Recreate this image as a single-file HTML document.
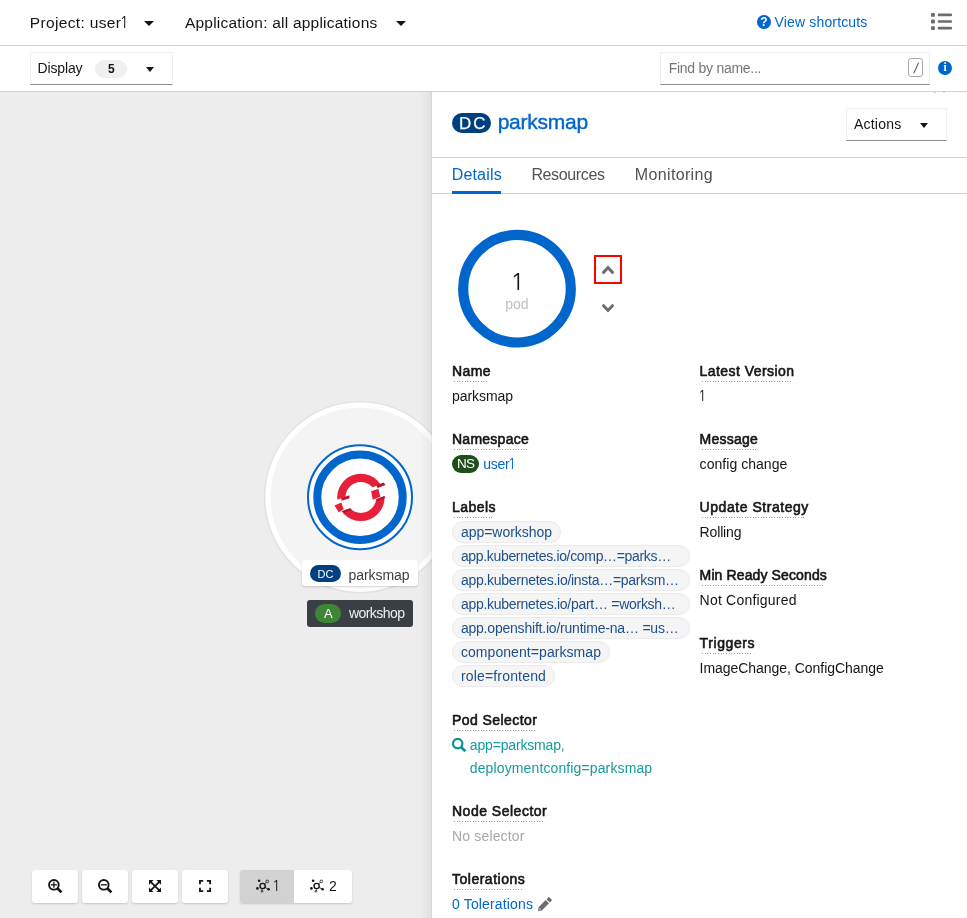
<!DOCTYPE html>
<html><head><meta charset="utf-8">
<style>
*{box-sizing:border-box}
html,body{margin:0;padding:0}
body{width:967px;height:918px;overflow:hidden;position:relative;background:#fff;font-family:"Liberation Sans",sans-serif;color:#151515;font-size:14px}
.a{position:absolute}
.caret{position:absolute;width:0;height:0;border-left:5px solid transparent;border-right:5px solid transparent;border-top:5.5px solid #151515}
.t{position:absolute;white-space:nowrap;line-height:1;display:block}
.n{font-family:"NanumGothic",sans-serif;line-height:0;margin:0 -.13em 0 -.12em}
.b{-webkit-text-stroke:.6px #151515}
.dot{position:absolute;height:1px;background:repeating-linear-gradient(90deg,#9b9ea1 0,#9b9ea1 1.1px,transparent 1.1px,transparent 2.667px)}
.pill{position:absolute;left:452px;height:22px;border-radius:11px;background:#f5f5f5;border:1px solid #ebebeb}
.btn{position:absolute;top:870px;height:33px;background:#fff;border-radius:3px;box-shadow:0 1px 2px rgba(0,0,0,.16)}
svg{position:absolute;overflow:visible}
#w{position:absolute;left:0;top:0;width:967px;height:918px;will-change:transform}
</style></head><body><div id="w">

<!-- canvas -->
<div class="a" style="left:0;top:92px;width:432px;height:826px;background:#ededed"></div>

<!-- topology -->
<svg style="left:0;top:92px" width="432" height="826" viewBox="0 92 432 826">
  <defs>
    <radialGradient id="gg" cx="50%" cy="50%" r="50%"><stop offset="0" stop-color="#f0f0f0"/><stop offset="1" stop-color="#f3f3f3"/></radialGradient>
  </defs>
  <circle cx="360" cy="497.3" r="95.3" fill="none" stroke="rgba(0,0,0,.045)" stroke-width="2"/>
  <circle cx="360" cy="497" r="92.1" fill="#f4f4f4" stroke="#ffffff" stroke-width="5.2"/>
  <circle cx="360" cy="497.3" r="52" fill="#ffffff" stroke="#0066cc" stroke-width="2"/>
  <circle cx="360" cy="497.3" r="42.7" fill="none" stroke="#0066cc" stroke-width="8"/>
  <!--LOGO--><g transform="translate(325,462) scale(0.07628)">
    <defs>
      <clipPath id="cu"><polygon points="0,0 918,0 918,225 0,551"/></clipPath>
      <clipPath id="cl"><polygon points="0,725 918,398 918,918 0,918"/></clipPath>
    </defs>
    <circle cx="470" cy="465" r="256" fill="none" stroke="#e61f3a" stroke-width="108" clip-path="url(#cu)"/>
    <circle cx="470" cy="465" r="256" fill="none" stroke="#e61f3a" stroke-width="108" clip-path="url(#cl)"/>
    <polygon points="125,570 215,530 245,620 180,660" fill="#e61f3a"/>
    <polygon points="605,385 700,350 725,455 625,495" fill="#e61f3a"/>
    <polygon points="212,472 320,435 322,474 218,508" fill="#b8142c"/>
    <polygon points="225,642 330,605 352,628 252,668" fill="#b8142c"/>
    <polygon points="672,306 770,268 792,300 690,340" fill="#b8142c"/>
    <polygon points="680,490 782,445 786,475 690,515" fill="#b8142c"/>
  </g><!--/LOGO-->
</svg>

<!-- node labels -->
<div class="a" style="left:302px;top:560px;width:116px;height:26px;background:#fff;border-radius:3px;box-shadow:0 1px 2px rgba(0,0,0,.18)"></div>
<div class="a" style="left:310px;top:565px;width:31px;height:16.5px;border-radius:9px;background:#004080"></div>
<div class="a" style="left:307px;top:600px;width:106px;height:27px;background:#393f44;border-radius:3px"></div>
<div class="a" style="left:315px;top:603.5px;width:26px;height:19.5px;border-radius:10px;background:#3e8635"></div>

<!-- control bar -->
<div class="btn" style="left:32px;width:46px"></div>
<div class="btn" style="left:82px;width:46px"></div>
<div class="btn" style="left:132px;width:46px"></div>
<div class="btn" style="left:182px;width:46px"></div>
<div class="btn" style="left:240px;width:112px"></div>
<div class="a" style="left:240px;top:870px;width:54px;height:33px;background:#d2d2d2;border-radius:3px 0 0 3px"></div>
<!--CTRLICONS--><svg style="left:0;top:860px" width="432" height="58" viewBox="0 860 432 58"><circle cx="53.9" cy="884.8" r="4.85" fill="none" stroke="#151515" stroke-width="1.9"/><line x1="57.6" y1="888.5" x2="61.5" y2="892.4" stroke="#151515" stroke-width="2.6" stroke-linecap="butt"/><line x1="50.9" y1="884.8" x2="56.9" y2="884.8" stroke="#151515" stroke-width="1.3"/><line x1="53.9" y1="881.8" x2="53.9" y2="887.8" stroke="#151515" stroke-width="1.3"/><circle cx="103.8" cy="884.8" r="4.85" fill="none" stroke="#151515" stroke-width="1.9"/><line x1="107.5" y1="888.5" x2="111.4" y2="892.4" stroke="#151515" stroke-width="2.6" stroke-linecap="butt"/><line x1="100.8" y1="884.8" x2="106.8" y2="884.8" stroke="#151515" stroke-width="1.3"/><path d="M150.0 881.05 L160.0 891.05 M160.0 881.05 L150.0 891.05" stroke="#151515" stroke-width="1.7" fill="none"/><polygon points="149.0,880.05 153.6,880.05 149.0,884.65" fill="#151515"/><polygon points="149.0,892.05 153.6,892.05 149.0,887.4499999999999" fill="#151515"/><polygon points="161.0,880.05 156.4,880.05 161.0,884.65" fill="#151515"/><polygon points="161.0,892.05 156.4,892.05 161.0,887.4499999999999" fill="#151515"/><path d="M203.25000000000003 880.9499999999999 L199.95000000000002 880.9499999999999 L199.95000000000002 884.2499999999999 M203.25000000000003 891.15 L199.95000000000002 891.15 L199.95000000000002 887.85 M206.85 880.9499999999999 L210.15 880.9499999999999 L210.15 884.2499999999999 M206.85 891.15 L210.15 891.15 L210.15 887.85 " stroke="#151515" stroke-width="1.8" fill="none" stroke-linecap="butt" stroke-linejoin="miter"/><line x1="264.6" y1="884" x2="266.6" y2="882.2" stroke="#151515" stroke-width=".7"/><line x1="265.1" y1="887.5" x2="268.3" y2="889.2" stroke="#151515" stroke-width=".8"/><line x1="262.3" y1="889" x2="262.1" y2="890.4" stroke="#151515" stroke-width=".7"/><circle cx="262.6" cy="886" r="2.6" fill="none" stroke="#151515" stroke-width="1.4"/><circle cx="259.1" cy="880.8" r="1.25" fill="#151515"/><circle cx="267.3" cy="881.4" r="1.35" fill="none" stroke="#151515" stroke-width=".8"/><circle cx="257.4" cy="888.4" r="1.3" fill="#151515"/><circle cx="268.6" cy="889.3" r="1.3" fill="#151515"/><circle cx="262" cy="891.3" r="0.95" fill="none" stroke="#151515" stroke-width=".8"/><line x1="318.6" y1="884" x2="320.6" y2="882.2" stroke="#151515" stroke-width=".7"/><line x1="319.1" y1="887.5" x2="322.3" y2="889.2" stroke="#151515" stroke-width=".8"/><line x1="316.3" y1="889" x2="316.1" y2="890.4" stroke="#151515" stroke-width=".7"/><circle cx="316.6" cy="886" r="2.6" fill="none" stroke="#151515" stroke-width="1.4"/><circle cx="313.1" cy="880.8" r="1.25" fill="#151515"/><circle cx="321.3" cy="881.4" r="1.35" fill="none" stroke="#151515" stroke-width=".8"/><circle cx="311.4" cy="888.4" r="1.3" fill="#151515"/><circle cx="322.6" cy="889.3" r="1.3" fill="#151515"/><circle cx="316" cy="891.3" r="0.95" fill="none" stroke="#151515" stroke-width=".8"/></svg><!--/CTRLICONS-->

<!-- side panel -->
<div class="a" style="left:432px;top:92px;width:535px;height:826px;background:#fff;"></div>
<div class="a" style="left:419px;top:92px;width:13px;height:826px;background:linear-gradient(90deg,rgba(0,0,0,0),rgba(0,0,0,.02) 45%,rgba(0,0,0,.055))"></div>
<div class="a" style="left:431px;top:92px;width:1px;height:826px;background:rgba(0,0,0,.045)"></div>

<!-- top bars -->
<div class="a" style="left:0;top:0;width:967px;height:46px;background:#fff;border-bottom:1px solid #d2d2d2"></div>
<div class="a" style="left:0;top:46px;width:967px;height:46px;background:#fff;border-bottom:1px solid #d2d2d2"></div>
<div class="caret" style="left:144px;top:20.8px"></div>
<div class="caret" style="left:396.4px;top:20.8px"></div>
<!-- ? icon -->
<div class="a" style="left:757.1px;top:15.1px;width:13.8px;height:13.8px;border-radius:50%;background:#0066cc;color:#fff;font-weight:700;font-size:12px;line-height:14.4px;text-align:center">?</div>
<!-- list icon -->
<svg style="left:930px;top:12px" width="24" height="20" viewBox="930 12 24 20">
 <g fill="#6a6e73">
  <rect x="931" y="13" width="3.9" height="3.8" rx=".9"/><rect x="937.7" y="13.6" width="14.4" height="2.6" rx="1.2"/>
  <rect x="931" y="19.6" width="3.9" height="3.8" rx=".9"/><rect x="937.7" y="20.2" width="14.4" height="2.6" rx="1.2"/>
  <rect x="931" y="26.2" width="3.9" height="3.8" rx=".9"/><rect x="937.7" y="26.8" width="14.4" height="2.6" rx="1.2"/>
 </g>
</svg>

<!-- display dropdown -->
<div class="a" style="left:30px;top:52px;width:143px;height:33px;border:1px solid #f0f0f0;border-bottom:1px solid #8a8d90;background:#fff"></div>
<div class="a" style="left:95px;top:60px;width:32px;height:18px;border-radius:9px;background:#f0f0f0"></div>
<div class="caret" style="left:145.6px;top:66.8px;border-left-width:4.4px;border-right-width:4.4px"></div>
<!-- search -->
<div class="a" style="left:660px;top:52px;width:270px;height:33px;border:1px solid #f0f0f0;border-bottom:1px solid #8a8d90;background:#fff"></div>
<div class="a" style="left:908px;top:58px;width:15px;height:18.5px;border:1px solid #a6a9ac;border-radius:3px;font-size:14px;text-align:center;line-height:19px;color:#4f5255"><span style="display:inline-block;transform:skewX(-11deg)">/</span></div>
<div class="a" style="left:938.2px;top:61px;width:13.8px;height:13.8px;border-radius:50%;background:#0066cc;color:#fff;font-weight:700;font-size:11.5px;line-height:13.6px;text-align:center;font-family:'Liberation Serif',serif">i</div>

<div class="a" style="left:934px;top:92px;width:2px;height:1px;background:#d0d0d0"></div><div class="a" style="left:942.6px;top:92px;width:2px;height:1px;background:#d0d0d0"></div>
<!-- panel header -->
<div class="a" style="left:452px;top:112.6px;width:39px;height:20px;border-radius:10px;background:#004080"></div>
<div class="a" style="left:846px;top:108px;width:101px;height:33px;border:1px solid #f0f0f0;border-bottom:1px solid #8a8d90;background:#fff"></div>
<div class="caret" style="left:919.6px;top:123px;border-left-width:4.4px;border-right-width:4.4px;border-top-width:5px"></div>
<div class="a" style="left:432px;top:157px;width:535px;height:1px;background:#d2d2d2"></div>
<div class="a" style="left:432px;top:193px;width:535px;height:1px;background:#d2d2d2"></div>
<div class="a" style="left:452px;top:191px;width:49px;height:3px;background:#0066cc"></div>

<!-- pod ring -->
<svg style="left:440px;top:215px" width="200" height="150" viewBox="440 215 200 150">
  <circle cx="517" cy="288.7" r="53.8" fill="none" stroke="#0066cc" stroke-width="10.2"/>
  <rect x="595" y="256" width="26" height="27" fill="none" stroke="#ff0000" stroke-width="2"/>
  <polyline points="603.5,272.4 608,267.7 612.5,272.4" fill="none" stroke="#6a6e73" stroke-width="3" stroke-linecap="round" stroke-linejoin="miter"/>
  <polyline points="603.5,305.7 608,310.3 612.5,305.7" fill="none" stroke="#6a6e73" stroke-width="3" stroke-linecap="round" stroke-linejoin="miter"/>
</svg>

<!-- dotted underlines -->
<div class="dot" style="left:454.2px;top:381px;width:34.6px"></div>
<div class="dot" style="left:454.2px;top:449px;width:72.6px"></div>
<div class="dot" style="left:454.2px;top:517px;width:39.6px"></div>
<div class="dot" style="left:454.2px;top:730px;width:80.6px"></div>
<div class="dot" style="left:454.2px;top:821px;width:90.6px"></div>
<div class="dot" style="left:454.2px;top:889px;width:68.6px"></div>
<div class="dot" style="left:701.8px;top:381px;width:90.6px"></div>
<div class="dot" style="left:701.8px;top:449px;width:54.6px"></div>
<div class="dot" style="left:701.8px;top:517px;width:104.6px"></div>
<div class="dot" style="left:701.8px;top:585px;width:123.6px"></div>
<div class="dot" style="left:701.8px;top:653px;width:50.6px"></div>

<!-- NS badge -->
<div class="a" style="left:452px;top:455px;width:27px;height:18px;border-radius:9px;background:#1e4f18"></div>

<!-- label pills -->
<div class="pill" style="top:521px;width:109px"></div>
<div class="pill" style="top:545px;width:238px"></div>
<div class="pill" style="top:569px;width:238px"></div>
<div class="pill" style="top:593px;width:238px"></div>
<div class="pill" style="top:617px;width:238px"></div>
<div class="pill" style="top:641px;width:158px"></div>
<div class="pill" style="top:665px;width:103px"></div>

<!-- search + pencil icons -->
<svg style="left:452px;top:738px" width="15" height="15" viewBox="452 738 15 15">
  <circle cx="457.7" cy="743.6" r="4.7" fill="none" stroke="#009596" stroke-width="2.2"/>
  <line x1="461.2" y1="747.1" x2="465.3" y2="751.2" stroke="#009596" stroke-width="2.7" stroke-linecap="butt"/>
</svg>
<svg style="left:538px;top:897px" width="14" height="14" viewBox="0 0 14 14">
  <path d="M0 14 L0.5 10.2 L7.7 3 L11 6.3 L3.8 13.5 Z M8.5 2.2 L10.3 0.4 Q10.9 -0.2 11.5 0.4 L13.6 2.5 Q14.2 3.1 13.6 3.7 L11.8 5.5 Z" fill="#6a6e73"/><circle cx="1.9" cy="12.1" r=".8" fill="#fff" opacity=".7"/>
</svg>

<span class="t" style="left:29.7px;top:15.08px;font-size:15.5px;color:#151515;letter-spacing:0.360px;">Project: user<span class="n">1</span></span>
<span class="t" style="left:184.9px;top:15.08px;font-size:15.5px;color:#151515;letter-spacing:0.222px;">Application: all applications</span>
<span class="t" style="left:774.6px;top:15.25px;font-size:14px;color:#0066cc;letter-spacing:0.149px;">View shortcuts</span>
<span class="t" style="left:37.6px;top:61.25px;font-size:14px;color:#151515;letter-spacing:-0.164px;">Display</span>
<span class="t" style="left:108.0px;top:62.94px;font-size:12px;font-weight:700;color:#151515;letter-spacing:0.000px;">5</span>
<span class="t" style="left:668.7px;top:61.25px;font-size:14px;color:#72767b;letter-spacing:-0.263px;">Find by name...</span>
<span class="t" style="left:497.7px;top:111.22px;font-size:21px;color:#0066cc;-webkit-text-stroke:.4px #0066cc;letter-spacing:-0.246px;">parksmap</span>
<span class="t" style="left:459.2px;top:115.56px;font-size:16px;color:#ffffff;transform:scaleX(1.06);transform-origin:0 0;-webkit-text-stroke:.25px #fff;letter-spacing:1.796px;">DC</span>
<span class="t" style="left:853.9px;top:117.25px;font-size:14px;color:#151515;letter-spacing:0.250px;">Actions</span>
<span class="t" style="left:451.7px;top:166.56px;font-size:16px;color:#0066cc;letter-spacing:0.179px;">Details</span>
<span class="t" style="left:531.4px;top:166.56px;font-size:16px;color:#4f5255;letter-spacing:-0.363px;">Resources</span>
<span class="t" style="left:634.8px;top:166.56px;font-size:16px;color:#4f5255;letter-spacing:0.353px;">Monitoring</span>
<span class="t" style="left:513.1px;top:270.18px;font-size:24px;color:#151515;letter-spacing:0.000px;"><span class="n">1</span></span>
<span class="t" style="left:505.3px;top:297.25px;font-size:14px;color:#bcbfc2;letter-spacing:-0.020px;">pod</span>
<span class="t b" style="left:699.6px;top:364.25px;font-size:14px;color:#151515;letter-spacing:0.437px;">Latest Version</span>
<span class="t" style="left:699.6px;top:389.25px;font-size:14px;color:#151515;letter-spacing:0.000px;"><span class="n">1</span></span>
<span class="t b" style="left:699.6px;top:432.25px;font-size:14px;color:#151515;letter-spacing:0.218px;">Message</span>
<span class="t" style="left:699.6px;top:457.25px;font-size:14px;color:#151515;letter-spacing:0.044px;">config change</span>
<span class="t b" style="left:699.6px;top:500.25px;font-size:14px;color:#151515;letter-spacing:0.539px;">Update Strategy</span>
<span class="t" style="left:699.6px;top:525.25px;font-size:14px;color:#151515;letter-spacing:-0.149px;">Rolling</span>
<span class="t b" style="left:699.6px;top:568.25px;font-size:14px;color:#151515;letter-spacing:0.120px;">Min Ready Seconds</span>
<span class="t" style="left:699.6px;top:593.25px;font-size:14px;color:#151515;letter-spacing:0.211px;">Not Configured</span>
<span class="t b" style="left:699.6px;top:636.25px;font-size:14px;color:#151515;letter-spacing:0.585px;">Triggers</span>
<span class="t" style="left:699.6px;top:661.25px;font-size:14px;color:#151515;letter-spacing:-0.043px;">ImageChange, ConfigChange</span>
<span class="t b" style="left:452.0px;top:364.25px;font-size:14px;color:#151515;letter-spacing:0.387px;">Name</span>
<span class="t" style="left:452.0px;top:389.25px;font-size:14px;color:#151515;letter-spacing:-0.050px;">parksmap</span>
<span class="t b" style="left:452.0px;top:432.25px;font-size:14px;color:#151515;letter-spacing:0.252px;">Namespace</span>
<span class="t" style="left:457.0px;top:456.77px;font-size:13.5px;color:#ffffff;transform:translateY(.4px);letter-spacing:-0.666px;">NS</span>
<span class="t" style="left:483.3px;top:456.25px;font-size:14px;color:#0066cc;transform:translateY(.5px);letter-spacing:-0.304px;">user<span class="n">1</span></span>
<span class="t b" style="left:452.0px;top:500.25px;font-size:14px;color:#151515;letter-spacing:0.451px;">Labels</span>
<span class="t" style="left:460.9px;top:525.25px;font-size:14px;color:#1d4f8a;letter-spacing:-0.021px;">app=workshop</span>
<span class="t" style="left:460.9px;top:549.25px;font-size:14px;color:#1d4f8a;letter-spacing:-0.328px;">app.kubernetes.io/comp…=parks…</span>
<span class="t" style="left:460.9px;top:573.25px;font-size:14px;color:#1d4f8a;letter-spacing:-0.281px;">app.kubernetes.io/insta…=parksm…</span>
<span class="t" style="left:460.9px;top:597.25px;font-size:14px;color:#1d4f8a;letter-spacing:-0.284px;">app.kubernetes.io/part… =worksh…</span>
<span class="t" style="left:460.9px;top:621.25px;font-size:14px;color:#1d4f8a;letter-spacing:-0.209px;">app.openshift.io/runtime-na… =us…</span>
<span class="t" style="left:460.9px;top:645.25px;font-size:14px;color:#1d4f8a;letter-spacing:0.070px;">component=parksmap</span>
<span class="t" style="left:460.9px;top:669.25px;font-size:14px;color:#1d4f8a;letter-spacing:0.176px;">role=frontend</span>
<span class="t b" style="left:452.0px;top:713.25px;font-size:14px;color:#151515;letter-spacing:0.423px;">Pod Selector</span>
<span class="t" style="left:469.8px;top:738.25px;font-size:14px;color:#159a9c;letter-spacing:-0.166px;">app=parksmap,</span>
<span class="t" style="left:469.8px;top:761.25px;font-size:14px;color:#159a9c;letter-spacing:0.122px;">deploymentconfig=parksmap</span>
<span class="t b" style="left:452.0px;top:804.25px;font-size:14px;color:#151515;letter-spacing:0.500px;">Node Selector</span>
<span class="t" style="left:452.0px;top:829.25px;font-size:14px;color:#a5a7a9;letter-spacing:0.161px;">No selector</span>
<span class="t b" style="left:452.0px;top:872.25px;font-size:14px;color:#151515;letter-spacing:0.502px;">Tolerations</span>
<span class="t" style="left:452.0px;top:897.25px;font-size:14px;color:#0066cc;letter-spacing:0.157px;">0 Tolerations</span>
<span class="t" style="left:317.6px;top:568.59px;font-size:11px;color:#ffffff;letter-spacing:-0.091px;">DC</span>
<span class="t" style="left:348.6px;top:567.25px;font-size:14px;color:#393f44;transform:translateY(.5px);letter-spacing:-0.078px;">parksmap</span>
<span class="t" style="left:324.1px;top:606.70px;font-size:13px;color:#ffffff;letter-spacing:0.000px;">A</span>
<span class="t" style="left:348.9px;top:606.25px;font-size:14px;color:#f0f0f0;letter-spacing:-0.529px;">workshop</span>
<span class="t" style="left:273.6px;top:879.05px;font-size:14px;color:#151515;letter-spacing:0.000px;"><span class="n">1</span></span>
<span class="t" style="left:328.9px;top:879.05px;font-size:14px;color:#151515;letter-spacing:0.000px;">2</span>
</div></body></html>
